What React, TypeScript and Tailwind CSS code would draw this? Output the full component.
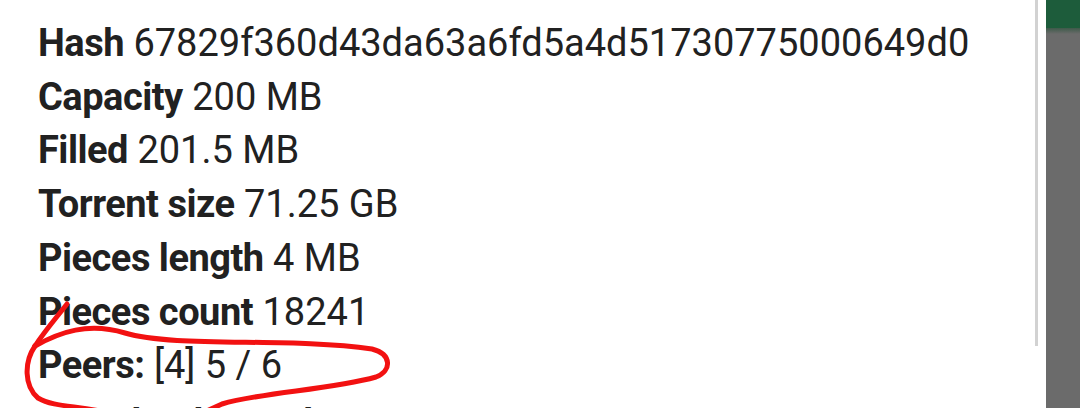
const rows: [string, string][] = [
  ['Hash', '67829f360d43da63a6fd5a4d51730775000649d0'],
  ['Capacity', '200 MB'],
  ['Filled', '201.5 MB'],
  ['Torrent size', '71.25 GB'],
  ['Pieces length', '4 MB'],
  ['Pieces count', '18241'],
  ['Peers:', '[4] 5 / 6'],
];

const Scribble = () => (
  <svg
    className="absolute left-0 top-0 pointer-events-none"
    width="1046"
    height="408"
    viewBox="0 0 1046 408"
    fill="none"
  >
    <g stroke="#f21111" strokeWidth="5" strokeLinecap="round" strokeLinejoin="round">
      <path d="M67 304 C56 318 44 332 35 346" />
      <path d="M35 346 C60 332 88 322 125 333 C175 348 290 337 372 349 C392 354 392 371 376 377 C330 390 262 392 222 404 L200 414" />
      <path d="M35 346 C24 362 24 386 38 398 C55 408 82 405 112 414" />
    </g>
  </svg>
);

export default function App() {
  return (
    <div className="flex h-[408px] w-[1080px] overflow-hidden bg-white">
      <div className="relative flex-1 overflow-hidden">
        <div className="pl-[38px] pt-[17px] font-['Roboto',sans-serif] text-[38px] leading-[53.7px] text-[#212121]">
          {rows.map(([label, value]) => (
            <div key={label} className="whitespace-nowrap">
              <span className="font-bold tracking-[-0.5px]">{label}</span> {value}
            </div>
          ))}
          <div className="mt-[4px] whitespace-nowrap">
            <span className="font-bold tracking-[-0.5px]">Download speed</span> 1.25 MB/s
          </div>
        </div>
        <Scribble />
      </div>
      <div className="flex w-[3px] flex-col">
        <div className="h-[346px] bg-[#d2d2d2]" />
      </div>
      <div className="w-[8px]" />
      <div className="flex w-[34px] flex-col bg-[#6b6b6b]">
        <div className="h-[28px] bg-[#1d5c3b]" />
        <div className="h-[6px] bg-gradient-to-b from-[#3d5a4a] to-[#6b6b6b]" />
      </div>
    </div>
  );
}
